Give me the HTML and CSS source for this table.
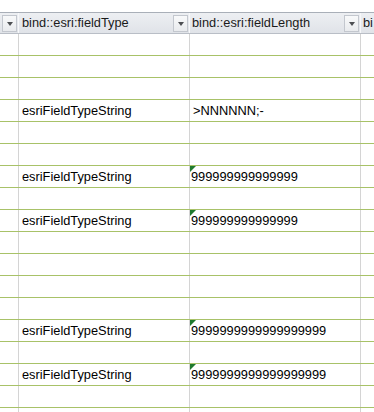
FILE: index.html
```html
<!DOCTYPE html>
<html>
<head>
<meta charset="utf-8">
<link rel="stylesheet" href="styles.css">
</head>
<body>
<div class="sheet">
  <div class="row head">
    <div class="cell c1"><span class="dd"><span class="arrow"></span></span></div>
    <div class="cell c2"><span class="htext">bind::esri:fieldType</span><span class="dd"><span class="arrow"></span></span></div>
    <div class="cell c3"><span class="htext">bind::esri:fieldLength</span><span class="dd"><span class="arrow"></span></span></div>
    <div class="cell c4"><span class="htext">bi</span></div>
  </div>
  <div class="row"><div class="cell c1"></div><div class="cell c2"></div><div class="cell c3"></div><div class="cell c4"></div></div>
  <div class="row"><div class="cell c1"></div><div class="cell c2"></div><div class="cell c3"></div><div class="cell c4"></div></div>
  <div class="row"><div class="cell c1"></div><div class="cell c2"></div><div class="cell c3"></div><div class="cell c4"></div></div>
  <div class="row"><div class="cell c1"></div><div class="cell c2">esriFieldTypeString</div><div class="cell c3">&gt;NNNNNN;-</div><div class="cell c4"></div></div>
  <div class="row"><div class="cell c1"></div><div class="cell c2"></div><div class="cell c3"></div><div class="cell c4"></div></div>
  <div class="row"><div class="cell c1"></div><div class="cell c2"></div><div class="cell c3"></div><div class="cell c4"></div></div>
  <div class="row"><div class="cell c1"></div><div class="cell c2">esriFieldTypeString</div><div class="cell c3 num"><span class="flag"></span>999999999999999</div><div class="cell c4"></div></div>
  <div class="row"><div class="cell c1"></div><div class="cell c2"></div><div class="cell c3"></div><div class="cell c4"></div></div>
  <div class="row"><div class="cell c1"></div><div class="cell c2">esriFieldTypeString</div><div class="cell c3 num"><span class="flag"></span>999999999999999</div><div class="cell c4"></div></div>
  <div class="row"><div class="cell c1"></div><div class="cell c2"></div><div class="cell c3"></div><div class="cell c4"></div></div>
  <div class="row"><div class="cell c1"></div><div class="cell c2"></div><div class="cell c3"></div><div class="cell c4"></div></div>
  <div class="row"><div class="cell c1"></div><div class="cell c2"></div><div class="cell c3"></div><div class="cell c4"></div></div>
  <div class="row"><div class="cell c1"></div><div class="cell c2"></div><div class="cell c3"></div><div class="cell c4"></div></div>
  <div class="row"><div class="cell c1"></div><div class="cell c2">esriFieldTypeString</div><div class="cell c3 num"><span class="flag"></span>9999999999999999999</div><div class="cell c4"></div></div>
  <div class="row"><div class="cell c1"></div><div class="cell c2"></div><div class="cell c3"></div><div class="cell c4"></div></div>
  <div class="row"><div class="cell c1"></div><div class="cell c2">esriFieldTypeString</div><div class="cell c3 num"><span class="flag"></span>9999999999999999999</div><div class="cell c4"></div></div>
  <div class="row"><div class="cell c1"></div><div class="cell c2"></div><div class="cell c3"></div><div class="cell c4"></div></div>
  <div class="row"><div class="cell c1"></div><div class="cell c2"></div><div class="cell c3"></div><div class="cell c4"></div></div>
</div>
</body>
</html>
```
FILE: styles.css
```css
html, body {
  margin: 0;
  padding: 0;
  background: #ffffff;
  overflow: hidden;
}
body {
  width: 374px;
  height: 412px;
}
.sheet {
  padding-top: 12px;
  font-family: "Liberation Sans", Arial, sans-serif;
  font-size: 12.8px;
  color: #000000;
  width: 374px;
  overflow: hidden;
}
.row {
  display: grid;
  grid-template-columns: 19px 171px 171px 13px;
  height: 22px;
  box-sizing: border-box;
  border-bottom: 1px solid #a8c268;
}
.cell {
  box-sizing: border-box;
  border-right: 1px solid #d4d4d4;
  padding-left: 3px;
  line-height: 21px;
  white-space: nowrap;
  overflow: hidden;
  position: relative;
}
.c3 { padding-left: 3px; }
.c3.num { padding-left: 1px; }
.c4 { padding-left: 2px; border-right: none; }
.head {
  border-top: 1px solid #a9afb8;
  border-bottom: 1px solid #b9bec6;
  background: linear-gradient(#edeff2, #e0e3e8);
  color: #1a1a1a;
}
.head .cell {
  display: flex;
  align-items: center;
  line-height: 20px;
  border-right: 1px solid #f7f8fa;
}
.head .c1 { padding-left: 2px; }
.head .c3 { padding-left: 2px; }
.head .c4 { border-right: none; }
.htext {
  flex: 0 0 auto;
}
.dd {
  margin-left: auto;
  margin-right: 1px;
  width: 15px;
  height: 17px;
  box-sizing: border-box;
  border: 1px solid #c3c7ce;
  background: linear-gradient(#f8f9fa, #e9ebee);
  display: flex;
  align-items: center;
  justify-content: center;
  flex: 0 0 auto;
}
.head .c1 .dd { margin-left: 0; }
.arrow {
  width: 0;
  height: 0;
  border-left: 3.5px solid transparent;
  border-right: 3.5px solid transparent;
  border-top: 4px solid #4d4f53;
  margin-top: 2px;
}
.flag {
  position: absolute;
  left: 0;
  top: 0;
  width: 0;
  height: 0;
  border-top: 6px solid #1f7a2e;
  border-right: 6px solid transparent;
}
```
